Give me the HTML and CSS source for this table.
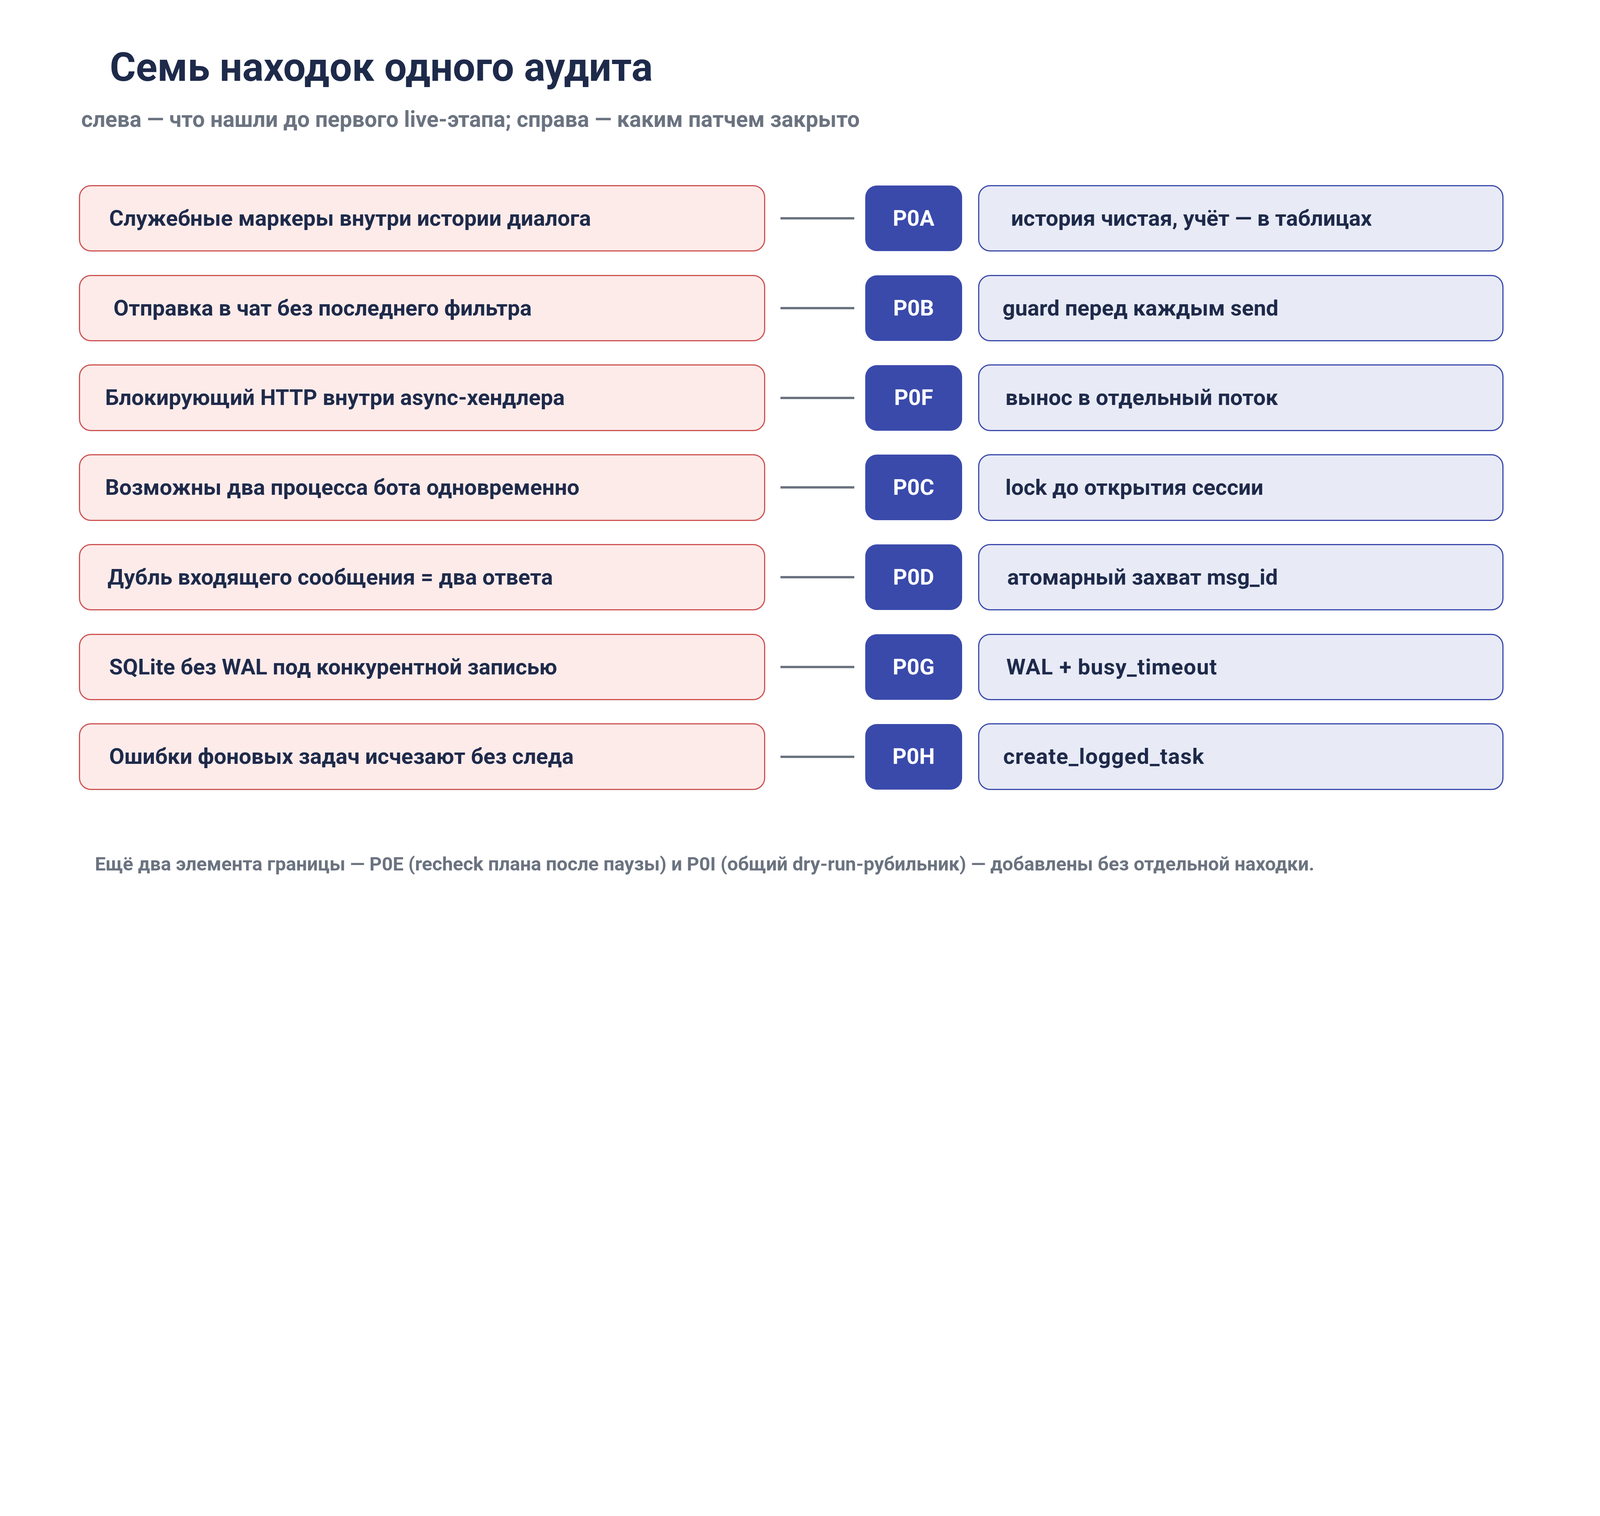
FILE: index.html
```html
<!DOCTYPE html>
<html lang="ru">
<head>
<meta charset="utf-8">
<title>Семь находок одного аудита</title>
<link rel="stylesheet" href="styles.css">
</head>
<body>
<main class="page">
  <h1 class="title">Семь находок одного аудита</h1>
  <p class="subtitle">слева — что нашли до первого live-этапа; справа — каким патчем закрыто</p>

  <section class="rows">
    <div class="row">
      <div class="finding">Служебные маркеры внутри истории диалога</div>
      <div class="link"></div>
      <div class="badge">P0A</div>
      <div class="fix">история чистая, учёт — в таблицах</div>
    </div>
    <div class="row">
      <div class="finding">Отправка в чат без последнего фильтра</div>
      <div class="link"></div>
      <div class="badge">P0B</div>
      <div class="fix">guard перед каждым send</div>
    </div>
    <div class="row">
      <div class="finding">Блокирующий HTTP внутри async-хендлера</div>
      <div class="link"></div>
      <div class="badge">P0F</div>
      <div class="fix">вынос в отдельный поток</div>
    </div>
    <div class="row">
      <div class="finding">Возможны два процесса бота одновременно</div>
      <div class="link"></div>
      <div class="badge">P0C</div>
      <div class="fix">lock до открытия сессии</div>
    </div>
    <div class="row">
      <div class="finding">Дубль входящего сообщения = два ответа</div>
      <div class="link"></div>
      <div class="badge">P0D</div>
      <div class="fix">атомарный захват msg_id</div>
    </div>
    <div class="row">
      <div class="finding">SQLite без WAL под конкурентной записью</div>
      <div class="link"></div>
      <div class="badge">P0G</div>
      <div class="fix fix--code">WAL + busy_timeout</div>
    </div>
    <div class="row">
      <div class="finding">Ошибки фоновых задач исчезают без следа</div>
      <div class="link"></div>
      <div class="badge">P0H</div>
      <div class="fix fix--code">create_logged_task</div>
    </div>
  </section>

  <p class="footnote">Ещё два элемента границы — P0E (recheck плана после паузы) и P0I (общий dry-run-рубильник) — добавлены без отдельной находки.</p>
</main>
</body>
</html>
```

FILE: styles.css
```css
html, body {
  margin: 0;
  padding: 0;
  background: #ffffff;
}

.page {
  display: flex;
  flex-direction: column;
  align-items: flex-start;
  padding-top: 112px;
  font-family: Roboto, "Liberation Sans", sans-serif;
  font-weight: 700;
  color: #1e2a4a;
}

.title {
  margin: 0 0 0 281px;
  font-size: 102px;
  line-height: 120px;
  font-weight: 700;
  color: #1e2a4a;
  white-space: nowrap;
}

.subtitle {
  margin: 39px 0 0 208px;
  font-size: 56.5px;
  line-height: 70px;
  color: #6b7380;
  white-space: nowrap;
}

.rows {
  display: flex;
  flex-direction: column;
  gap: 59.4px;
  margin: 132.8px 0 0 201.6px;
}

.row {
  display: flex;
  align-items: center;
  height: 170.4px;
}

.finding,
.fix {
  box-sizing: border-box;
  flex: none;
  height: 170.4px;
  display: flex;
  align-items: center;
  font-size: 56.4px;
  line-height: 1;
  border-radius: 31px;
  white-space: nowrap;
}

.finding {
  width: 1757.4px;
  padding-left: 75px;
  background: #fdebea;
  border: 3.6px solid #cd5353;
}

.row:nth-child(2) .finding { padding-left: 86px; }
.row:nth-child(3) .finding,
.row:nth-child(4) .finding { padding-left: 64.6px; }
.row:nth-child(5) .finding { padding-left: 70.6px; }

.link {
  flex: none;
  width: 189px;
  height: 6px;
  margin: 0 27.6px 0 39px;
  background: #6b7380;
}

.badge {
  flex: none;
  width: 248.4px;
  height: 168px;
  display: flex;
  align-items: center;
  justify-content: center;
  border-radius: 30px;
  background: #3a4aab;
  color: #ffffff;
  font-size: 56.4px;
  line-height: 1;
}

.fix {
  width: 1345.2px;
  margin-left: 40.8px;
  padding-left: 69.4px;
  background: #e8eaf6;
  border: 3px solid #3a4aab;
}

.fix--code {
  letter-spacing: 1.3px;
}

.row:nth-child(1) .fix { padding-left: 81.4px; }
.row:nth-child(2) .fix { padding-left: 59.8px; }
.row:nth-child(3) .fix,
.row:nth-child(4) .fix { padding-left: 67px; }
.row:nth-child(5) .fix { padding-left: 71.8px; }
.row:nth-child(7) .fix { padding-left: 61.6px; }

.footnote {
  margin: 160px 0 0 243px;
  font-size: 49px;
  line-height: 60px;
  color: #6b7380;
  white-space: nowrap;
}
```
